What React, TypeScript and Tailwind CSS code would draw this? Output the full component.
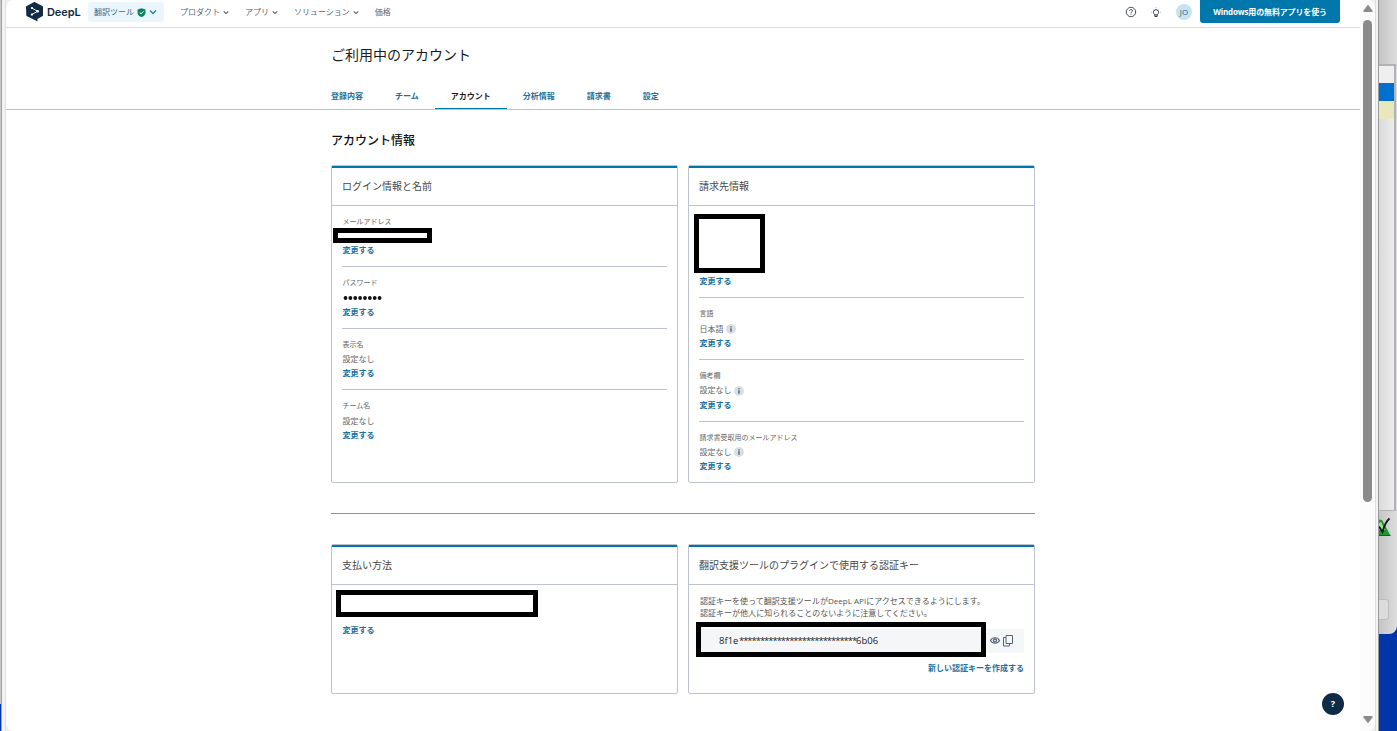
import clsx from "clsx";
import type { ReactNode } from "react";

const tabs = [
  "登録内容",
  "チーム",
  "アカウント",
  "分析情報",
  "請求書",
  "設定",
];

function Chevron({ className }: { className?: string }) {
  return (
    <svg viewBox="0 0 8 6" className={className} fill="none">
      <path d="M1 1.5 4 4.5 7 1.5" stroke="currentColor" strokeWidth="1.4" />
    </svg>
  );
}

function Logo() {
  return (
    <svg
      viewBox="0 0 16 20"
      preserveAspectRatio="none"
      className="h-[20px] w-[17px]"
    >
      <path
        d="M0 5.2c0-.5.3-.9.7-1.1L7.3.3c.4-.3.9-.3 1.3 0l6.7 3.8c.4.2.7.6.7 1.1v8c0 .5-.3.9-.7 1.1l-4.6 2.7.1 2.6-2.6-1.5-7.2-3.8c-.4-.2-.7-.6-.7-1.1z"
        fill="#0f2b46"
      />
      <path
        d="M5.4 6 11 9.3 5.4 12.6"
        fill="none"
        stroke="#fff"
        strokeWidth="0.9"
      />
      <circle cx="5.6" cy="6" r="1" fill="#fff" />
      <circle cx="11" cy="9.3" r="1.2" fill="#fff" />
      <circle cx="5.6" cy="12.6" r="1.1" fill="#fff" />
    </svg>
  );
}

function NavItem({ label, menu = true }: { label: string; menu?: boolean }) {
  return (
    <div className="flex items-center gap-[3px] text-[#5b6775]">
      <span>{label}</span>
      {menu && <Chevron className="h-[5px] w-[6px] text-[#4b5a6a]" />}
    </div>
  );
}

function Header() {
  return (
    <header className="flex h-[28px] items-start justify-between border-b border-[#dadde1] pr-[20px] pl-[20px] text-[8px]">
      <div className="flex h-[24px] items-center">
        <Logo />
        <span className="ml-[4px] w-[36px] font-['Inter'] text-[11px] font-semibold tracking-[-0.1px] text-[#0f2b46]">
          DeepL
        </span>
        <div className="ml-[5px] flex h-[20px] w-[76px] items-center rounded-[3px] bg-[#eaf6fb] pl-[6px] text-[#3a6b88]">
          <span>翻訳ツール</span>
          <svg viewBox="0 0 10 10" className="ml-[3px] h-[9px] w-[9px]">
            <path
              d="M5 .2 9.4 1.6v3.6C9.4 7.6 7.5 9.2 5 10 2.5 9.2.6 7.6.6 5.2V1.6z"
              fill="#0b8360"
            />
            <path
              d="m3 5 1.5 1.5L7.2 3.8"
              fill="none"
              stroke="#fff"
              strokeWidth="1.1"
            />
          </svg>
          <Chevron className="ml-[3px] h-[6px] w-[8px] text-[#1b84b3]" />
        </div>
        <nav className="ml-[16px] flex items-center gap-[16px]">
          <NavItem label="プロダクト" />
          <NavItem label="アプリ" />
          <NavItem label="ソリューション" />
          <NavItem label="価格" menu={false} />
        </nav>
      </div>
      <div className="flex h-[24px] items-center">
        <svg
          viewBox="0 0 12 12"
          className="h-[12px] w-[12px] text-[#33404e]"
          fill="none"
          stroke="currentColor"
        >
          <circle cx="6" cy="6" r="4.7" strokeWidth="0.9" />
          <path
            d="M4.5 4.9C4.6 3.9 5.2 3.5 6 3.5s1.5.5 1.5 1.3c0 1-1.5 1-1.5 2.1M6 7.8v.9"
            strokeWidth="0.9"
          />
        </svg>
        <svg
          viewBox="0 0 12 12"
          className="ml-[13px] h-[12px] w-[12px] text-[#33404e]"
          fill="none"
          stroke="currentColor"
        >
          <path
            d="M4.8 8.6C3.9 8.1 3.4 7.3 3.4 6.3a2.6 2.6 0 0 1 5.2 0c0 1-.5 1.8-1.4 2.3v1.9H4.8zM4.8 8.9h2.4"
            strokeWidth="1"
          />
          <path
            d="M6 1.4v.9M1.2 6.3h.7M10.100 6.300h.7M2.600 2.900l.5.5M9.400 2.900l-.5.5"
            strokeWidth="0.5"
          />
        </svg>
        <div className="ml-[14px] flex h-[16px] w-[16px] items-center justify-center rounded-full bg-[#c5e4ef] text-[8px] text-[#2f6383]">
          JO
        </div>
        <button className="ml-[8px] h-[23px] w-[140px] self-start rounded-b-[3px] bg-[#0077aa] text-[8px] font-bold tracking-[-0.15px] whitespace-nowrap text-white">
          Windows用の無料アプリを使う
        </button>
      </div>
    </header>
  );
}

function Tabs() {
  return (
    <div className="flex h-[26px] border-b border-[#bfc3d0] pl-[309px]">
      {tabs.map((tab) => (
        <div
          key={tab}
          className={clsx(
            "h-[25px] px-4 pt-[6px] text-[8px] leading-[12px] font-bold",
            tab === "アカウント"
              ? "border-b border-[#0077aa] text-[#1b1b1b]"
              : "text-[#1a73a0]",
          )}
        >
          {tab}
        </div>
      ))}
    </div>
  );
}

function Card({
  title,
  className,
  children,
}: {
  title: string;
  className: string;
  children: ReactNode;
}) {
  return (
    <section
      className={clsx(
        "w-[347px] rounded-[2px] border border-[#bfc3d0]",
        className,
      )}
    >
      <div className="h-[40px] border-t-2 border-b border-t-[#0077aa] border-b-[#bfc3d0] px-[10px] text-[10px] leading-[36px] text-[#4a4a4a]">
        {title}
      </div>
      <div className="relative px-[10px] pt-[8px]">{children}</div>
    </section>
  );
}

function ChangeLink() {
  return (
    <a className="block h-[14.4px] pl-[0.5px] text-[8px] leading-[14.4px] font-bold text-[#1a73a0]">
      変更する
    </a>
  );
}

function InfoDot() {
  return (
    <svg viewBox="0 0 10 10" className="h-[10px] w-[10px]">
      <circle cx="5" cy="5" r="5" fill="#d9dfe4" />
      <path d="M5 4.300v3.4M5 2.200v1.2" stroke="#53606d" strokeWidth="1.4" />
    </svg>
  );
}

function Row({
  label,
  value,
  info,
  first,
}: {
  label: string;
  value?: ReactNode;
  info?: boolean;
  first?: boolean;
}) {
  return (
    <div
      className={clsx(
        "pb-[8.4px] text-[#666]",
        !first && "border-t border-[#bfc3d0] pt-[9px]",
      )}
    >
      <div className="h-[14.4px] pl-[0.5px] text-[7px] leading-[14.4px]">
        {label}
      </div>
      <div className="flex h-[14.4px] items-center gap-[2.5px] pl-[0.5px] text-[8px] leading-[14.4px]">
        {value}
        {info && <InfoDot />}
      </div>
      <ChangeLink />
    </div>
  );
}

function Dots() {
  return (
    <svg viewBox="0 0 40 6" className="h-[6px] w-[40px]" fill="#111">
      {[0, 1, 2, 3, 4, 5, 6, 7].map((i) => (
        <circle key={i} cx={2.5 + i * 4.87} cy="3" r="1.9" />
      ))}
    </svg>
  );
}

// Black frame laid over private values
function Redaction({ className }: { className: string }) {
  return <div className={clsx("absolute border-5 border-black", className)} />;
}

function ApiKey() {
  return (
    <>
      <p className="pt-[2px] pl-[1px] text-[8px] leading-[12px] tracking-[0.02px] whitespace-nowrap text-[#555]">
        認証キーを使って翻訳支援ツールがDeepL APIにアクセスできるようにします。
        <br />
        認証キーが他人に知られることのないように注意してください。
      </p>
      <div className="mt-[10px] flex h-[24px] items-center bg-[#f5f6f8] pl-[20px] text-[9.5px] text-[#222]">
        <div className="flex w-[269px] items-center pt-[1px]">
          <span className="w-[20px]">8f1e</span>
          <span className="w-[117px] tracking-[-1.05px]">
            {"*".repeat(28)}
          </span>
          <span>6b06</span>
        </div>
        <svg
          viewBox="0 0 12 12"
          className="ml-[1px] h-[12px] w-[12px]"
          fill="none"
          stroke="#53657a"
        >
          <path
            d="M1.400 5.500C3.300 1.900 8.700 1.900 10.600 5.500 8.700 9.100 3.300 9.100 1.400 5.500z"
            strokeWidth="1.1"
          />
          <circle cx="6" cy="5.5" r="1.5" strokeWidth="1.3" />
        </svg>
        <svg
          viewBox="0 0 12 12"
          className="ml-[1px] h-[12px] w-[12px]"
          fill="none"
          stroke="#53657a"
          strokeWidth="1"
        >
          <path d="M4 .5h6.5v8H4z" />
          <path d="M4 2.500H1.500v8.500h6V8.500" />
        </svg>
      </div>
      <a className="mt-[8px] block text-right text-[8px] leading-[14px] font-bold text-[#1a73a0]">
        新しい認証キーを作成する
      </a>
      <Redaction className="top-[37px] left-[7px] h-[35px] w-[290px]" />
    </>
  );
}

function Content() {
  return (
    <main className="relative h-[731px] w-[1354px] overflow-hidden rounded-l-[8px] bg-white">
      <Header />
      <h1 className="mt-[16px] h-[40px] pl-[325px] text-[14px] leading-[22px] text-[#1b1b1b]">
        ご利用中のアカウント
      </h1>
      <Tabs />
      <div className="ml-[325px] w-[704px]">
        <h2 className="mt-[20px] h-[35px] text-[12px] leading-[22px] font-medium text-[#111]">
          アカウント情報
        </h2>
        <div className="flex gap-[10px]">
          <Card title="ログイン情報と名前" className="h-[318px]">
            <div className="pt-[0.5px]">
              <Row first label="メールアドレス" />
              <Row label="パスワード" value={<Dots />} />
              <Row label="表示名" value="設定なし" />
              <Row label="チーム名" value="設定なし" />
            </div>
            <Redaction className="top-[22px] left-[1px] h-[15px] w-[99px]" />
          </Card>
          <Card title="請求先情報" className="h-[318px]">
            <div className="pt-[60.4px] pb-[8.6px]">
              <ChangeLink />
            </div>
            <Row label="言語" value="日本語" info />
            <Row label="備考欄" value="設定なし" info />
            <Row label="請求書受取用のメールアドレス" value="設定なし" info />
            <Redaction className="top-[8px] left-[5px] h-[59px] w-[71px]" />
          </Card>
        </div>
        <hr className="mt-[30px] mb-[30px] border-t border-[#8a94a3]" />
        <div className="flex gap-[10px]">
          <Card title="支払い方法" className="h-[150px]">
            <div className="pt-[30px]">
              <ChangeLink />
            </div>
            <Redaction className="top-[5px] left-[4px] h-[27px] w-[202px]" />
          </Card>
          <Card
            title="翻訳支援ツールのプラグインで使用する認証キー"
            className="h-[150px]"
          >
            <ApiKey />
          </Card>
        </div>
      </div>
      <button className="absolute right-[16px] bottom-[16px] h-[22px] w-[22px] rounded-full bg-[#0f2b46] text-[9px] font-bold text-white">
        ?
      </button>
    </main>
  );
}

function Scrollbar() {
  return (
    <div className="flex h-[731px] w-[15px] flex-col items-center rounded-r-[7px] bg-[#fcfcfc] pt-[5px]">
      <svg viewBox="0 0 10 7" className="h-[7px] w-[10px]" fill="#8b8b8b">
        <path d="M4.3.5a.9.9 0 0 1 1.4 0l3.9 5.3c.3.6 0 1.2-.6 1.2H1c-.6 0-.9-.6-.6-1.2z" />
      </svg>
      <div className="mt-[8px] h-[482px] w-[9px] rounded-full bg-[#8b8b8b]" />
      <svg
        viewBox="0 0 10 7"
        className="mt-[214px] h-[7px] w-[10px] rotate-180"
        fill="#8b8b8b"
      >
        <path d="M4.3.5a.9.9 0 0 1 1.4 0l3.9 5.3c.3.6 0 1.2-.6 1.2H1c-.6 0-.9-.6-.6-1.2z" />
      </svg>
    </div>
  );
}

// Slice of the window that sits behind the browser
function BackWindow() {
  return (
    <div className="h-[731px] w-[18px] bg-[#0036a8]">
      <div className="flex h-[634px] flex-col rounded-br-[8px] bg-linear-to-r from-[#c4c4c4] to-[#dedede]">
        <div className="mt-[64px] flex h-[447px] w-[17px] flex-col border-t-2 border-r-2 border-b border-[#b2b2b8] bg-linear-to-r from-[#dadada] to-[#ededed]">
          <div className="h-[17px] bg-[#efefef]" />
          <div className="h-[18px] bg-[#0070d0]" />
          <div className="h-[18px] bg-[#e8e7be]" />
        </div>
        <svg viewBox="0 0 12 20" className="mt-[6px] h-[20px] w-[12px]">
          <path d="M0 2.500 3 3l8.500 15.500H0z" fill="#1c9a32" />
          <path d="M0 6 2 5l4 8H0z" fill="#9be08f" />
          <path d="M0 18.500h11.500" stroke="#12601f" strokeWidth="1" />
          <path
            d="M0 9.500 3.500 15C5 9 7 4.500 10.500 1.500"
            fill="none"
            stroke="#14161d"
            strokeWidth="1.8"
          />
        </svg>
        <div className="mt-[62px] h-[21px] w-[10px] rounded-r-[3px] border border-l-0 border-[#bdbdbd] bg-[#dcdcdc]" />
      </div>
    </div>
  );
}

function App() {
  return (
    <div className="flex h-[731px] w-[1397px] overflow-hidden bg-[#eeeeee] font-['Open_Sans','Noto_Sans_CJK_JP',sans-serif]">
      <div className="flex w-[6px]">
        <div className="w-[1px]">
          <div className="h-[704px] bg-[#c6c6c8]" />
          <div className="h-[27px] bg-[#0036a8]" />
        </div>
        <div className="w-[5px] border-r border-l border-r-[#e0e0e0] border-l-[#a2a2a2] bg-[#f2f2f2]" />
      </div>
      <Content />
      <Scrollbar />
      <div className="w-[4px] border-r border-l border-r-[#9a9a9a] border-l-[#dedede] bg-[#f3f3f3]" />
      <BackWindow />
    </div>
  );
}

export default App;
